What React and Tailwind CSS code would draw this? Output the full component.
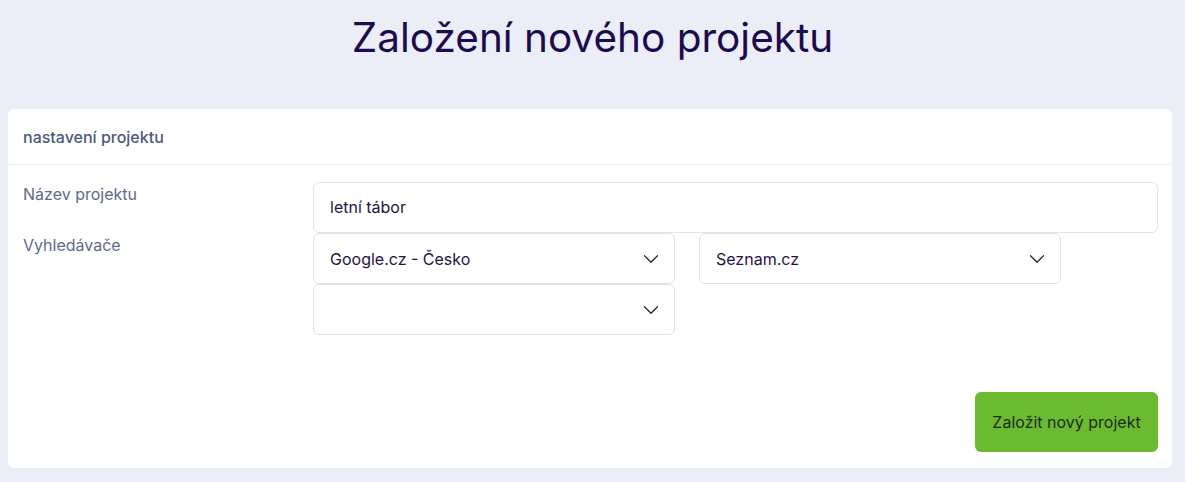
import { ChevronDown } from 'lucide-react';

const font = { fontFamily: 'Inter, "Noto Sans", sans-serif' };

function Select({ value }) {
  return (
    <div className="flex h-[51px] w-[362px] items-center justify-between rounded-md border border-[#dfe3ec] bg-white pl-4 pr-[10px] text-[16px] text-[#231448]">
      <span>{value}</span>
      <ChevronDown className="h-[26px] w-[26px] text-[#222]" strokeWidth={1.1} />
    </div>
  );
}

export default function App() {
  return (
    <div className="min-h-[482px] bg-[#eceef7] pt-[10px]" style={font}>
      <h1 className="text-center text-[40.5px] leading-[56px] font-normal text-[#1c0c4f]">
        Založení nového projektu
      </h1>

      <div className="mt-[43px] ml-[8px] mr-[13px] rounded-md bg-white">
        {/* Header */}
        <div className="flex h-[56px] items-center border-b border-[#eef0f5] px-[15px] text-[16px] font-medium text-[#4b5a7c]">
          nastavení projektu
        </div>

        {/* Form */}
        <div className="pl-[15px] pr-[14px] pt-[17px] pb-[16px]">
          <div className="flex">
            <div className="w-[290px] text-[16px] text-[#5d6b8c]">Název projektu</div>
            <div className="flex h-[51px] flex-1 items-center rounded-md border border-[#dfe3ec] px-4 pb-px text-[16px] text-[#231448]">
              letní tábor
            </div>
          </div>

          <div className="flex">
            <div className="w-[290px] text-[16px] text-[#5d6b8c]">Vyhledávače</div>
            <div className="flex flex-col">
              <div className="flex gap-[24px]">
                <Select value="Google.cz - Česko" />
                <Select value="Seznam.cz" />
              </div>
              <Select value="" />
            </div>
          </div>

          <div className="mt-[57px] flex justify-end">
            <button className="h-[60px] w-[183px] rounded-md bg-[#6bbb31] text-[16px] text-[#1f2a14]">
              Založit nový projekt
            </button>
          </div>
        </div>
      </div>
    </div>
  );
}
